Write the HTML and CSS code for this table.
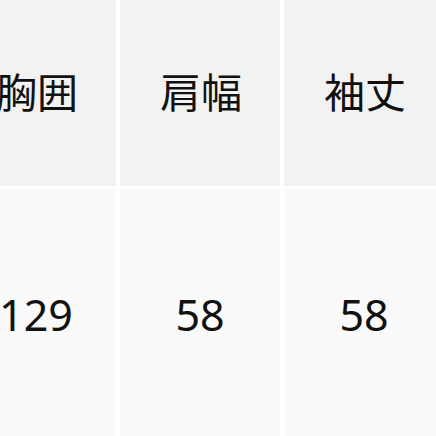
FILE: index.html
```html
<!DOCTYPE html>
<html lang="ja">
<head>
<meta charset="utf-8">
<link rel="stylesheet" href="styles.css">
</head>
<body>
<div class="table">
  <div class="cell head">胸囲</div>
  <div class="cell head">肩幅</div>
  <div class="cell head">袖丈</div>
  <div class="cell body">129</div>
  <div class="cell body">58</div>
  <div class="cell body">58</div>
</div>
</body>
</html>
```
FILE: styles.css
```css
html, body {
  margin: 0;
  padding: 0;
  background: #ffffff;
  overflow: hidden;
  width: 436px;
  height: 436px;
}
.table {
  display: grid;
  grid-template-columns: 160px 160px 160px;
  grid-template-rows: 186px 256px;
  column-gap: 4px;
  row-gap: 2px;
  margin-left: -44px;
  width: 488px;
}
.cell {
  display: flex;
  align-items: center;
  justify-content: center;
  color: #111111;
}
.head {
  background: #f2f2f2;
  font-family: "Noto Sans CJK JP", sans-serif;
  font-size: 41px;
  padding-bottom: 6px;
  padding-left: 2px;
}
.body {
  background: #fafafa;
  font-family: "Noto Sans", "Noto Sans CJK JP", sans-serif;
  font-size: 43px;
  padding-bottom: 4px;
}
```
